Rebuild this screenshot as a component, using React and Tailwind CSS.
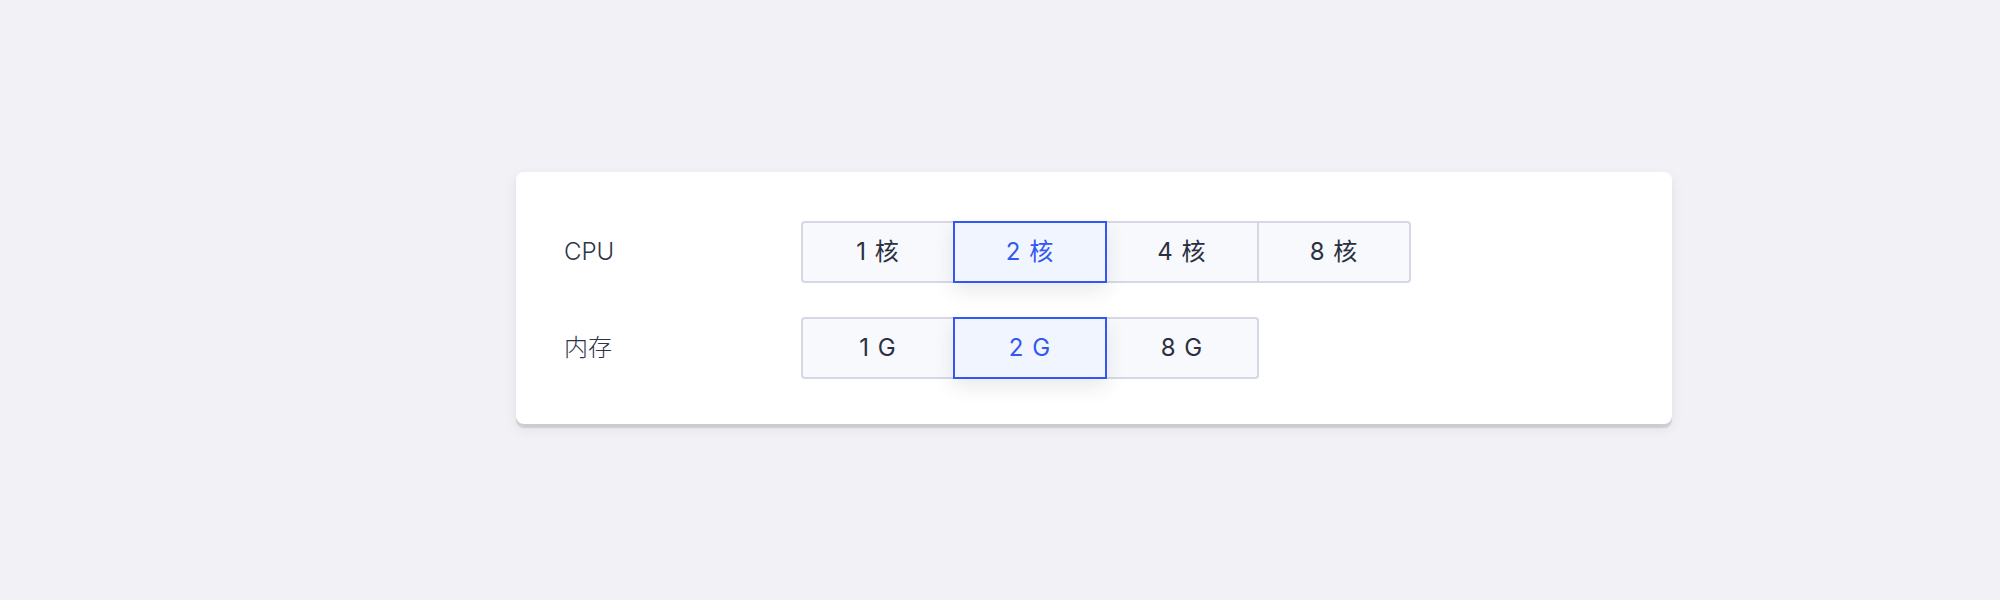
import React, { useState } from "react";

const specs = [
  { key: "cpu", label: "CPU", options: ["1 核", "2 核", "4 核", "8 核"] },
  { key: "mem", label: "内存", options: ["1 G", "2 G", "8 G"] },
];

export default function App() {
  const [picked, setPicked] = useState({ cpu: "2 核", mem: "2 G" });

  return (
    <div
      className="min-h-[600px] w-[2000px] bg-[#f2f2f6] pl-[516px] pt-[172px]"
      style={{ fontFamily: '"Inter", "Noto Sans CJK SC", sans-serif' }}
    >
      {/* Spec card */}
      <div className="w-[1156px] rounded-[8px] bg-white pl-[48px] pt-[49px] pb-[45px] shadow-[0_4px_1px_rgba(0,0,0,0.11),0_5px_14px_rgba(0,0,0,0.07)] flex flex-col gap-[34px]">
        {specs.map((spec) => (
          <div key={spec.key} className="flex items-center">
            <span className="w-[237px] text-[24px] font-light text-[#2f3547] leading-none">
              {spec.label}
            </span>
            <div className="flex">
              {spec.options.map((opt, i) => {
                const active = picked[spec.key] === opt;
                const first = i === 0;
                const last = i === spec.options.length - 1;
                return (
                  <button
                    key={opt}
                    type="button"
                    onClick={() => setPicked({ ...picked, [spec.key]: opt })}
                    className={`relative h-[62px] w-[154px] border-2 text-[24px] leading-none tracking-[1px] ${
                      first ? "rounded-l-[4px]" : "-ml-[2px]"
                    } ${last ? "rounded-r-[4px]" : ""} ${
                      active
                        ? "z-10 border-[#3358f0] bg-[#f1f5ff] text-[#3358f0] shadow-[0_8px_18px_rgba(40,50,90,0.1)]"
                        : "border-[#d6d8e4] bg-[#f8f9fc] text-[#2a3042]"
                    }`}
                  >
                    {opt}
                  </button>
                );
              })}
            </div>
          </div>
        ))}
      </div>
    </div>
  );
}
